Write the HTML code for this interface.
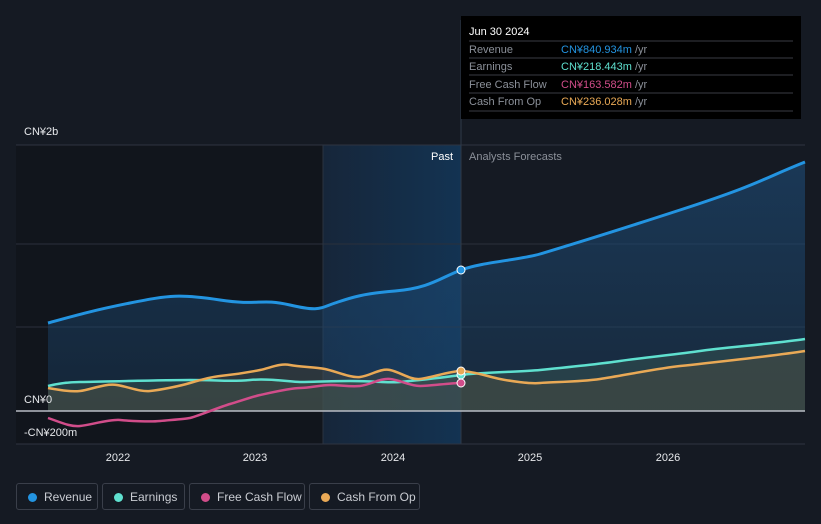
<!DOCTYPE html><html><head><style>
body{margin:0;background:#151a23;width:821px;height:524px;overflow:hidden;font-family:"Liberation Sans",sans-serif}
.lg{position:absolute;top:483px;height:27px;border:1px solid #3a3f4a;border-radius:3px;color:#c9ccd2;font-size:12px;line-height:27px;box-sizing:border-box;padding-left:27px}
.lg i{position:absolute;left:11px;top:9px;width:9px;height:9px;border-radius:50%}
</style></head><body>
<svg width="821" height="524" style="position:absolute;left:0;top:0" font-family="Liberation Sans, sans-serif">
<defs>
<linearGradient id="pg" x1="0" x2="1" y1="0" y2="0"><stop offset="0" stop-color="#16263a"/><stop offset="1" stop-color="#133352"/></linearGradient>
<linearGradient id="rf" x1="0" x2="0" y1="0" y2="1"><stop offset="0" stop-color="#1d4c78" stop-opacity=".6"/><stop offset="1" stop-color="#1d4c78" stop-opacity=".3"/></linearGradient>
</defs>
<rect x="16" y="145" width="307" height="299" fill="#11151c"/>
<rect x="323" y="145" width="138" height="299" fill="url(#pg)"/>
<line x1="16" y1="145" x2="805" y2="145" stroke="#2e3440"/>
<line x1="16" y1="244" x2="805" y2="244" stroke="#2a303b"/>
<line x1="16" y1="327" x2="805" y2="327" stroke="#2a303b"/>
<line x1="323" y1="145" x2="323" y2="444" stroke="#2a3340"/>
<line x1="461" y1="20" x2="461" y2="444" stroke="#2f3a48"/>
<line x1="16" y1="444" x2="805" y2="444" stroke="#2e3440"/>
<path d="M48,323 C70,317 90,311 130,303 S180,294 220,300 S260,298 290,305 S320,308 335,303 S360,294 395,291 S440,278 461,270 S520,260 540,254 S600,236 680,210 S760,180 805,162 L805,411 L48,411Z" fill="url(#rf)"/>
<path d="M48,386 L80,382 L190,380 L250,380 L350,381 L461,375 L540,370 L620,361 L700,351 L805,339 L805,411 L48,411Z" fill="#3a5a55" opacity=".45"/>
<path d="M48,388 C60,390 70,392 80,391 S105,383 117,385 S140,392 150,391 S180,386 190,383 S210,377 220,376 S250,372 260,370 S280,363 290,365 S315,367 325,369 S350,378 360,377 S380,368 390,370 S410,380 420,379 S450,371 461,371 S490,377 500,379 S530,384 540,383 S580,382 600,379 S660,368 680,366 S780,355 805,351 L805,411 L48,411Z" fill="#5a5040" opacity=".35"/>
<line x1="16" y1="411" x2="805" y2="411" stroke="#b8bcc4" stroke-width="1.5"/>
<path d="M48,323 C70,317 90,311 130,303 S180,294 220,300 S260,298 290,305 S320,308 335,303 S360,294 395,291 S440,278 461,270 S520,260 540,254 S600,236 680,210 S760,180 805,162" fill="none" stroke="#2394e1" stroke-width="3"/>
<path d="M48,386 C60,383 70,382 80,382 S160,380 190,380 S230,382 250,380 S290,382 300,382 S330,381 350,381 S390,383 400,382 S440,378 461,375 S520,372 540,370 S600,364 620,361 S680,354 700,351 S780,343 805,339" fill="none" stroke="#5fe0cf" stroke-width="2.5"/>
<path d="M48,418 C60,422 70,427 80,426 S110,419 120,420 S150,422 160,421 S185,419 190,418 S220,407 230,404 S255,396 260,395 S290,388 300,388 S320,385 330,385 S350,387 360,386 S380,378 390,379 S410,386 420,386 S450,383 461,383" fill="none" stroke="#d14d8a" stroke-width="2.5"/>
<path d="M48,388 C60,390 70,392 80,391 S105,383 117,385 S140,392 150,391 S180,386 190,383 S210,377 220,376 S250,372 260,370 S280,363 290,365 S315,367 325,369 S350,378 360,377 S380,368 390,370 S410,380 420,379 S450,371 461,371 S490,377 500,379 S530,384 540,383 S580,382 600,379 S660,368 680,366 S780,355 805,351" fill="none" stroke="#e9a956" stroke-width="2.5"/>
<circle cx="461" cy="270" r="4" fill="#2394e1" stroke="#fff" stroke-width="1"/>
<circle cx="461" cy="375" r="4" fill="#5fe0cf" stroke="#fff" stroke-width="1"/>
<circle cx="461" cy="383" r="4" fill="#d14d8a" stroke="#fff" stroke-width="1"/>
<circle cx="461" cy="371" r="4" fill="#e9a956" stroke="#fff" stroke-width="1"/>
<text x="24" y="135" fill="#e6e8eb" font-size="11">CN¥2b</text>
<text x="24" y="403" fill="#e6e8eb" font-size="11">CN¥0</text>
<text x="24" y="436" fill="#e6e8eb" font-size="11">-CN¥200m</text>
<text x="453" y="160" fill="#fff" font-size="11" text-anchor="end">Past</text>
<text x="469" y="160" fill="#8b9099" font-size="11">Analysts Forecasts</text>
<g fill="#e6e8eb" font-size="11" text-anchor="middle"><text x="118" y="461">2022</text><text x="255" y="461">2023</text><text x="393" y="461">2024</text><text x="530" y="461">2025</text><text x="668" y="461">2026</text></g>
<rect x="461" y="16" width="340" height="103" fill="#000"/>
<text x="469" y="35" fill="#fff" font-size="11">Jun 30 2024</text>
<g stroke="#3a3d43"><line x1="469" y1="41" x2="793" y2="41"/><line x1="469" y1="58" x2="793" y2="58"/><line x1="469" y1="75" x2="793" y2="75"/><line x1="469" y1="93" x2="793" y2="93"/><line x1="469" y1="111" x2="793" y2="111"/></g>
<g font-size="11" fill="#8b9099"><text x="469" y="53">Revenue</text><text x="469" y="70">Earnings</text><text x="469" y="88">Free Cash Flow</text><text x="469" y="105">Cash From Op</text></g>
<g font-size="11"><text x="561" y="53"><tspan fill="#2394e1">CN¥840.934m</tspan><tspan fill="#8b9099"> /yr</tspan></text>
<text x="561" y="70"><tspan fill="#5fe0cf">CN¥218.443m</tspan><tspan fill="#8b9099"> /yr</tspan></text>
<text x="561" y="88"><tspan fill="#d14d8a">CN¥163.582m</tspan><tspan fill="#8b9099"> /yr</tspan></text>
<text x="561" y="105"><tspan fill="#e9a956">CN¥236.028m</tspan><tspan fill="#8b9099"> /yr</tspan></text></g>
</svg>
<div class="lg" style="left:16px;width:82px"><i style="background:#2394e1"></i>Revenue</div>
<div class="lg" style="left:102px;width:83px"><i style="background:#5fe0cf"></i>Earnings</div>
<div class="lg" style="left:189px;width:116px"><i style="background:#d14d8a"></i>Free Cash Flow</div>
<div class="lg" style="left:309px;width:111px"><i style="background:#e9a956"></i>Cash From Op</div>
</body></html>
